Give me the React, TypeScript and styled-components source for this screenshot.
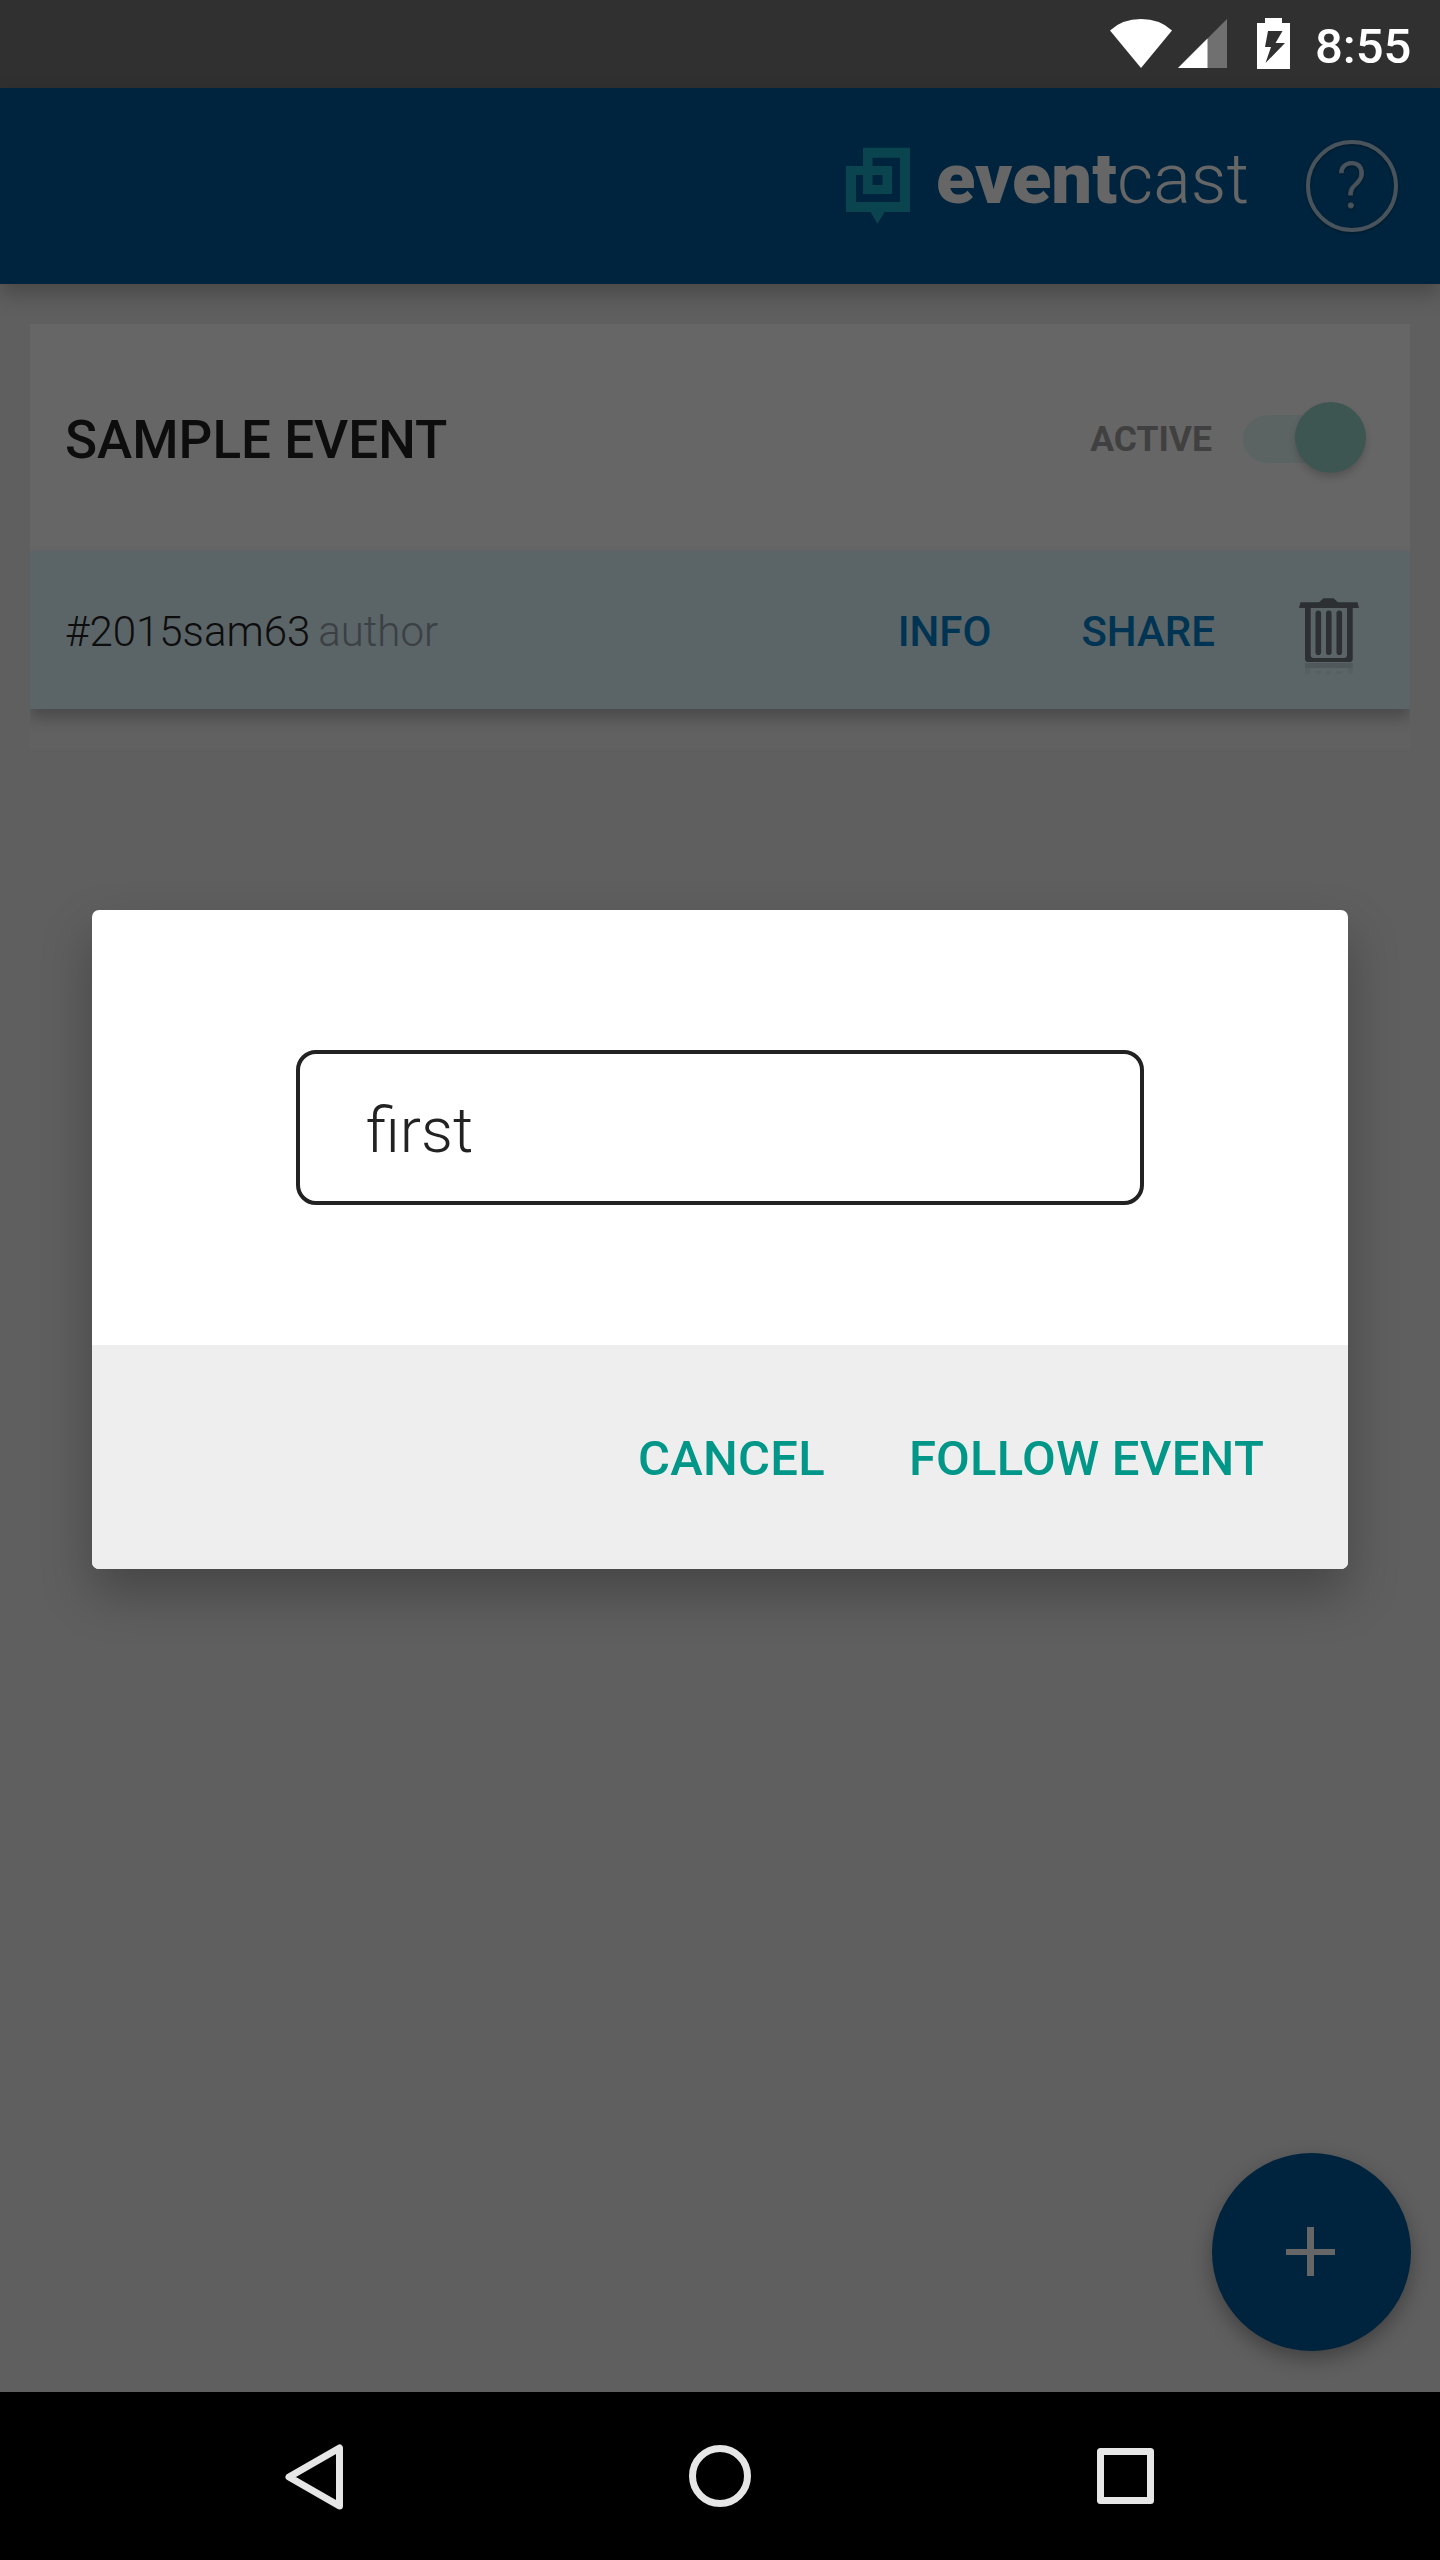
import React from "react";
import styled, { createGlobalStyle } from "styled-components";

const GlobalStyle = createGlobalStyle`
  *, *::before, *::after { box-sizing: border-box; }
  body {
    margin: 0;
    background: #000;
    font-family: Roboto, "Noto Sans", sans-serif;
  }
  button { font-family: inherit; border: 0; padding: 0; background: none; }
`;

const Screen = styled.div`
  position: relative;
  width: 1440px;
  height: 2560px;
  display: flex;
  flex-direction: column;
  overflow: hidden;
`;

const StatusBar = styled.div`
  height: 88px;
  flex: none;
  display: flex;
  justify-content: flex-end;
  padding-right: 28px;
  background: #303030;
`;

const StatusIcons = styled.svg`
  display: block;
  width: 190px;
  height: 88px;
  margin-right: 15px;
`;

const Clock = styled.span`
  width: 97px;
  padding-top: 4px;
  font-size: 49px;
  font-weight: 500;
  line-height: 86px;
  color: #fff;
  white-space: nowrap;
`;

const AppBar = styled.header`
  position: relative;
  z-index: 1;
  height: 196px;
  flex: none;
  display: flex;
  justify-content: flex-end;
  padding: 52px 42px 0 0;
  background: #00243d;
  box-shadow: 0 10px 20px rgba(0, 0, 0, 0.24);
`;

const Brand = styled.svg`
  display: block;
  width: 420px;
  height: 92px;
  margin-right: 41px;
  overflow: visible;
`;

const HelpButton = styled.button`
  width: 92px;
  height: 92px;
  border: 4.5px solid #48535b;
  border-radius: 50%;
  padding: 0 1px 0 0;
  color: #48535b;
  font-size: 65px;
  font-weight: 300;
  line-height: 82px;
  text-align: center;
  -webkit-text-stroke: 0.8px #48535b;
  filter: drop-shadow(0 1px 1px rgba(0, 0, 0, 0.35));
`;

const Content = styled.main`
  position: relative;
  flex: 1;
  padding: 40px 30px;
  background: #5f5f5f;
`;

const Card = styled.article`
  height: 425px;
  overflow: hidden;
  background: #616161;
`;

const CardHeader = styled.div`
  height: 227px;
  display: flex;
  align-items: center;
  padding: 3px 44px 0 35px;
  background: #666;
`;

const Title = styled.h2`
  margin: 1px 0 0;
  flex: 1;
  font-size: 53px;
  font-weight: 500;
  line-height: 62px;
  color: #0d0d0d;
`;

const StateLabel = styled.span`
  font-size: 35.5px;
  font-weight: 700;
  line-height: 42px;
  margin-right: 31px;
  color: #404040;
`;

const Track = styled.div`
  width: 123px;
  height: 48px;
  display: flex;
  align-items: center;
  justify-content: flex-end;
  border-radius: 24px;
  background: linear-gradient(90deg, #5c6463 0 100px, transparent 100px);
`;

const Thumb = styled.div`
  width: 71px;
  height: 71px;
  flex: none;
  margin-bottom: 3px;
  border-radius: 50%;
  background: #3d5652;
  box-shadow: 0 5px 7px rgba(0, 0, 0, 0.16);
`;

const CardActions = styled.div`
  height: 158px;
  display: flex;
  align-items: center;
  padding: 3px 50px 0 35px;
  background: #5b6467;
  box-shadow: 0 9px 14px rgba(0, 0, 0, 0.24);
`;

const Hashtag = styled.span`
  font-size: 42px;
  font-weight: 300;
  line-height: 50px;
  color: #0d0d0d;
`;

const Role = styled(Hashtag)`
  flex: 1;
  margin-left: 8px;
  color: #3a4043;
`;

const LinkButton = styled.button<{ $gap: number }>`
  margin-right: ${(p) => p.$gap}px;
  font-size: 42px;
  font-weight: 500;
  line-height: 50px;
  color: #003452;
`;

const TrashIcon = styled.svg`
  display: block;
  width: 62px;
  height: 84px;
  margin-top: 5px;
`;

const Fab = styled.button`
  position: absolute;
  right: 29px;
  bottom: 41px;
  width: 199px;
  height: 198px;
  border-radius: 50%;
  background: #00243d;
  box-shadow: 0 8px 20px rgba(0, 0, 0, 0.32);
`;

const FabIcon = styled.svg`
  display: block;
`;

const Overlay = styled.div`
  position: absolute;
  z-index: 2;
  inset: 88px 0 168px;
  display: flex;
  align-items: center;
  justify-content: center;
  padding-bottom: 1px;
`;

const Dialog = styled.section`
  width: 1256px;
  height: 659px;
  display: flex;
  flex-direction: column;
  overflow: hidden;
  border-radius: 7px;
  background: #fff;
  box-shadow: 0 24px 50px rgba(0, 0, 0, 0.27);
`;

const DialogBody = styled.div`
  height: 435px;
  display: flex;
  align-items: center;
  justify-content: center;
`;

const TextInput = styled.input`
  width: 848px;
  height: 155px;
  border: 4px solid #222;
  border-radius: 20px;
  padding: 6px 66px 0;
  outline: none;
  background: #fff;
  font-family: Roboto, "Noto Sans", sans-serif;
  font-size: 63px;
  font-weight: 300;
  color: #222;
`;

const DialogActions = styled.div`
  flex: 1;
  display: flex;
  align-items: center;
  justify-content: flex-end;
  gap: 84px;
  padding: 4px 84px 0 0;
  background: #eee;
`;

const ActionButton = styled.button`
  font-size: 49px;
  font-weight: 500;
  letter-spacing: 0.25px;
  line-height: 58px;
  color: #009688;
`;

const NavBar = styled.nav`
  height: 168px;
  flex: none;
  display: flex;
  justify-content: center;
  gap: 265px;
  background: #000;
`;

const NavIcon = styled.svg`
  display: block;
  width: 140px;
  height: 168px;
  fill: none;
  stroke: #e6e6e6;
  stroke-width: 7px;
  stroke-linejoin: round;
`;

export default function App() {
  return (
    <Screen>
      <GlobalStyle />
      <StatusBar>
        <StatusIcons viewBox="1110 0 190 88">
          <path d="M1110 30.5 Q1122 19 1141 19 Q1160 19 1172 30.5 L1141 68 Z" fill="#fff" />
          <path d="M1178 68 L1227 19 V68 Z" fill="#707070" />
          <path d="M1178 68 L1207.500 38.500 V68 Z" fill="#fff" />
          <path d="M1257 23 H1265 V18 H1282 V23 H1290 V69 H1257 Z" fill="#fff" />
          <path d="M1268 31 H1282.500 L1275.500 43 H1285 L1265.500 63 L1271 47 H1265 Z" fill="#303030" />
        </StatusIcons>
        <Clock>8:55</Clock>
      </StatusBar>

      <AppBar>
        <Brand viewBox="0 0 420 92">
          <path
            fill="#0a444f"
            fillRule="evenodd"
            transform="translate(-15 0)"
            d="M33 7.700 H80 V72 H54.700 L47.300 83.700 L40.700 72 H16 V26 H33 Z
               M42.500 17.700 V26 H62 V54 H33 V35 H26 V62 H70 V17.700 Z
               M42.500 35 V45 H52.500 V35 Z"
          />
          <text x="91" y="63" fontSize="71" fontWeight="900" fill="#666" textLength="181" lengthAdjust="spacingAndGlyphs">
            event
          </text>
          <text x="272" y="63" fontSize="70" fontWeight="300" fill="#666" textLength="132" lengthAdjust="spacingAndGlyphs">
            cast
          </text>
        </Brand>
        <HelpButton>?</HelpButton>
      </AppBar>

      <Content>
        <Card>
          <CardHeader>
            <Title>SAMPLE EVENT</Title>
            <StateLabel>ACTIVE</StateLabel>
            <Track>
              <Thumb />
            </Track>
          </CardHeader>
          <CardActions>
            <Hashtag>#2015sam63</Hashtag>
            <Role>author</Role>
            <LinkButton $gap={90}>INFO</LinkButton>
            <LinkButton $gap={83}>SHARE</LinkButton>
            <TrashIcon viewBox="0 0 62 84">
              <g fill="#2c3033">
                <path d="M1 16 L2.500 10.300 H21 L25.500 6.300 H35.500 L40 10.300 H59.500 L61 16 Z" />
                <path
                  fillRule="evenodd"
                  d="M7 15 H54.700 V67 Q54.700 70 51.700 70 H10 Q7 70 7 67 Z M12.700 16 V63 Q12.700 66 15.700 66 H46 Q49 66 49 63 V16 Z"
                />
                <rect x="17.500" y="18.500" width="5.600" height="44.500" rx="2.800" />
                <rect x="28" y="18.500" width="5.600" height="44.500" rx="2.800" />
                <rect x="38.500" y="18.500" width="5.600" height="44.500" rx="2.800" />
              </g>
              <path d="M7 71 H54.700 V76 H7 Z" fill="#50585b" />
              <path d="M7 76 H12 V82 H7 Z M49.700 76 H54.700 V82 H49.700 Z M18 79 h5 v3 h-5 Z M28 79 h5 v3 h-5 Z M38.500 79 h5 v3 h-5 Z" fill="#565f62" />
            </TrashIcon>
          </CardActions>
        </Card>
        <Fab aria-label="Add event">
          <FabIcon width="199" height="198" viewBox="0 0 199 198">
            <path d="M95 74 H102 V96 H123 V102 H102 V123 H95 V102 H74 V96 H95 Z" fill="#666" />
          </FabIcon>
        </Fab>
      </Content>

      <NavBar>
        <NavIcon viewBox="246 0 140 168">
          <path d="M340.500 56 V114 L290 85 Z" />
        </NavIcon>
        <NavIcon viewBox="0 0 140 168">
          <circle cx="70" cy="84" r="27.500" />
        </NavIcon>
        <NavIcon viewBox="0 0 140 168">
          <rect x="45.500" y="59.500" width="50" height="49" />
        </NavIcon>
      </NavBar>

      <Overlay>
        <Dialog>
          <DialogBody>
            <TextInput defaultValue="first" />
          </DialogBody>
          <DialogActions>
            <ActionButton>CANCEL</ActionButton>
            <ActionButton>FOLLOW EVENT</ActionButton>
          </DialogActions>
        </Dialog>
      </Overlay>
    </Screen>
  );
}
